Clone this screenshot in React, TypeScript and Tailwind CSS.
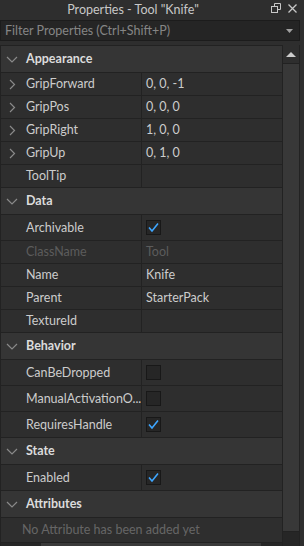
type Prop =
  | { kind: 'text'; name: string; value?: string; expand?: boolean; disabled?: boolean }
  | { kind: 'check'; name: string; checked: boolean };

interface Section {
  title: string;
  props: Prop[];
}

const sections: Section[] = [
  {
    title: 'Appearance',
    props: [
      { kind: 'text', name: 'GripForward', value: '0, 0, -1', expand: true },
      { kind: 'text', name: 'GripPos', value: '0, 0, 0', expand: true },
      { kind: 'text', name: 'GripRight', value: '1, 0, 0', expand: true },
      { kind: 'text', name: 'GripUp', value: '0, 1, 0', expand: true },
      { kind: 'text', name: 'ToolTip', value: '' },
    ],
  },
  {
    title: 'Data',
    props: [
      { kind: 'check', name: 'Archivable', checked: true },
      { kind: 'text', name: 'ClassName', value: 'Tool', disabled: true },
      { kind: 'text', name: 'Name', value: 'Knife' },
      { kind: 'text', name: 'Parent', value: 'StarterPack' },
      { kind: 'text', name: 'TextureId', value: '' },
    ],
  },
  {
    title: 'Behavior',
    props: [
      { kind: 'check', name: 'CanBeDropped', checked: false },
      { kind: 'check', name: 'ManualActivationO...', checked: false },
      { kind: 'check', name: 'RequiresHandle', checked: true },
    ],
  },
  {
    title: 'State',
    props: [{ kind: 'check', name: 'Enabled', checked: true }],
  },
];

function Checkbox({ checked }: { checked: boolean }) {
  return (
    <div className="w-[15px] h-[15px] bg-[#262626] border border-[#181818] flex items-center justify-center">
      {checked && (
        <svg width="13" height="13" viewBox="0 0 13 13">
          <path d="M2 6.5 L5 10 L11 2.5" fill="none" stroke="#3ea6ff" strokeWidth="1.6" />
        </svg>
      )}
    </div>
  );
}

function Header({ title }: { title: string }) {
  return (
    <div className="h-[27px] flex items-center bg-[#353535] border-b border-[#222222]">
      <svg width="12" height="7" viewBox="0 0 12 7" className="ml-[5px]">
        <path d="M1 1 L6 6 L11 1" fill="none" stroke="#8a8a8a" strokeWidth="1.2" />
      </svg>
      <span className="ml-[8px] font-bold text-[#dcdcdc]">{title}</span>
    </div>
  );
}

function Row({ p }: { p: Prop }) {
  const tall = p.kind === 'check';
  const dim = p.kind === 'text' && p.disabled;
  return (
    <div className={`${tall ? 'h-[26px]' : 'h-[23px]'} flex border-b border-[#222222]`}>
      <div className="w-[141px] flex items-center border-r border-[#222222] shrink-0 overflow-hidden">
        <div className="w-[25px] shrink-0 flex">
          {p.kind === 'text' && p.expand && (
            <svg width="7" height="11" viewBox="0 0 7 11" className="ml-[8px]">
              <path d="M1 1 L5.5 5.5 L1 10" fill="none" stroke="#8a8a8a" strokeWidth="1.2" />
            </svg>
          )}
        </div>
        <span className={`whitespace-nowrap ${dim ? 'text-[#5c5c5c]' : 'text-[#cccccc]'}`}>{p.name}</span>
      </div>
      <div className="flex-1 flex items-center pl-[4px]">
        {p.kind === 'check' ? (
          <Checkbox checked={p.checked} />
        ) : (
          <span className={dim ? 'text-[#5c5c5c]' : 'text-[#cccccc]'}>{p.value}</span>
        )}
      </div>
    </div>
  );
}

export default function App() {
  return (
    <div
      className="w-[304px] h-[546px] bg-[#2e2e2e] overflow-hidden flex flex-col text-[12.5px] leading-[16px]"
      style={{ fontFamily: 'Lato, "Noto Sans", sans-serif' }}
    >
      {/* title bar */}
      <div className="h-[19px] flex items-center relative shrink-0">
        <div className="flex-1 text-center text-[#c8c8c8] pr-[38px]">Properties - Tool "Knife"</div>
        <div className="absolute right-[7px] top-[3px] flex items-center gap-[7px]">
          <svg width="10" height="10" viewBox="0 0 10 10">
            <rect x="0.5" y="3.5" width="6" height="6" fill="none" stroke="#c8c8c8" />
            <path d="M3.5 3.5 V0.5 H9.5 V6.5 H6.5" fill="none" stroke="#c8c8c8" />
          </svg>
          <svg width="9" height="9" viewBox="0 0 9 9">
            <path d="M0.5 0.5 L8.5 8.5 M8.5 0.5 L0.5 8.5" stroke="#c8c8c8" strokeWidth="1.3" />
          </svg>
        </div>
      </div>

      {/* filter */}
      <div className="h-[21px] mt-[1px] mr-[4px] bg-[#252525] border border-[#1c1c1c] flex items-center pl-[4px] pr-[6px] shrink-0">
        <span className="flex-1 text-[#858585]">Filter Properties (Ctrl+Shift+P)</span>
        <svg width="7" height="4" viewBox="0 0 7 4">
          <path d="M0 0 H7 L3.5 4 Z" fill="#a0a0a0" />
        </svg>
      </div>

      {/* list + scrollbar */}
      <div className="flex flex-1 mt-[4px] min-h-0">
        <div className="w-[283px] border-l border-t border-r border-[#222222] flex flex-col">
          {sections.map((s) => (
            <div key={s.title}>
              <Header title={s.title} />
              {s.props.map((p) => (
                <Row key={p.name} p={p} />
              ))}
            </div>
          ))}
          <Header title="Attributes" />
          <div className="h-[25px] flex items-center pl-[21px] text-[#666666] border-b border-[#222222]">
            No Attribute has been added yet
          </div>
          <div className="flex-1 bg-[#262626] flex items-end">
            <div className="ml-[40px] w-[220px] h-[3px] bg-[#3a3a3a]" />
          </div>
        </div>
        <div className="w-[17px] flex flex-col border-r border-[#222222]">
          <div className="h-[19px] bg-[#2e2e2e] border-b border-[#222222] flex items-center justify-center">
            <svg width="10" height="5" viewBox="0 0 10 5">
              <path d="M0 5 L5 0 L10 5 Z" fill="#cccccc" />
            </svg>
          </div>
          <div className="h-[468px] bg-[#383838] border-b border-[#222222]" />
          <div className="flex-1 bg-[#262626]" />
        </div>
        <div className="flex-1 bg-[#2e2e2e]" />
      </div>
    </div>
  );
}
